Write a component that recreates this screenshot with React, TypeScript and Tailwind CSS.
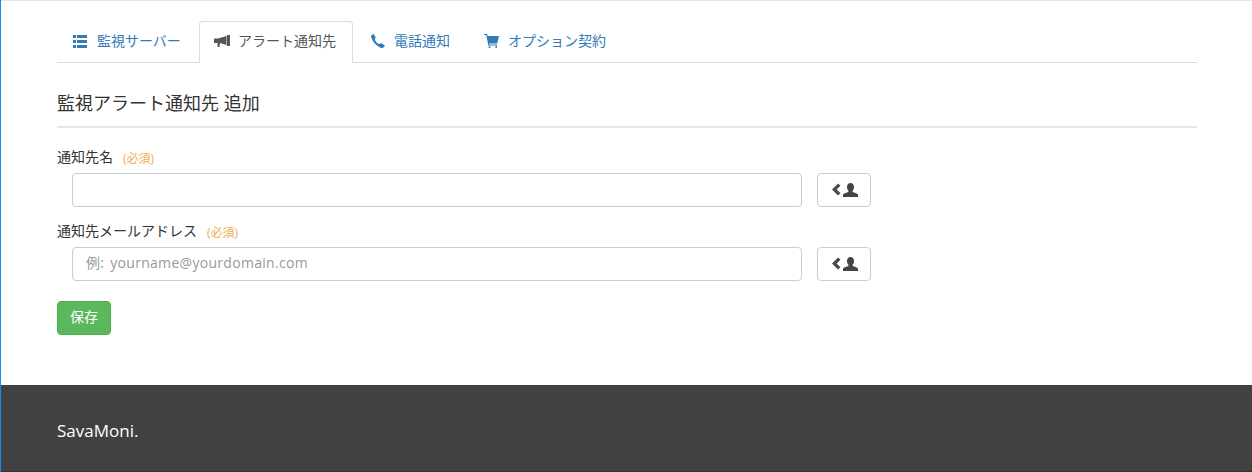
import React from "react";

const font = "font-['Open_Sans','Noto_Sans_CJK_JP',sans-serif]";

function ListIcon() {
  return (
    <svg width="14" height="13" viewBox="0 0 14 13" fill="currentColor">
      <rect x="0" y="0" width="3" height="3" />
      <rect x="4" y="0" width="10" height="3" />
      <rect x="0" y="5" width="3" height="3" />
      <rect x="4" y="5" width="10" height="3" />
      <rect x="0" y="10" width="3" height="3" />
      <rect x="4" y="10" width="10" height="3" />
    </svg>
  );
}

function HornIcon() {
  return (
    <svg width="16" height="12" viewBox="0 0 16 12" fill="currentColor">
      <rect x="13" y="0" width="3" height="11" />
      <path d="M0 3.5 H4 L12.5 1 V10 L6 8 V8 L5.5 12 H3.5 L3.5 8 H0 Z" />
    </svg>
  );
}

function PhoneIcon() {
  return (
    <svg width="14" height="14" viewBox="0 0 14 14" fill="currentColor">
      <path d="M2.6 0 L4.8 3.6 L3.6 5 C4.4 7.4 6 9.2 8.4 10.3 L9.9 9 L14 11.6 L12.4 13.6 C11.6 14.2 10.4 14.1 9 13.4 C4.6 11.4 1.8 8 0.3 3.6 C-0.1 2.2 0.2 1.2 1 0.7 Z" />
    </svg>
  );
}

function CartIcon() {
  return (
    <svg width="15" height="14" viewBox="0 0 15 14" fill="currentColor">
      <path d="M0 0 H3 L3.6 2 H15 L13.2 9.5 H5.2 L5.4 10.6 H13.2 V11.6 H4.4 L2.2 1 H0 Z" />
      <circle cx="5.5" cy="13" r="1" />
      <circle cx="12.2" cy="13" r="1" />
    </svg>
  );
}

function PickIcon() {
  return (
    <svg width="28" height="14" viewBox="0 0 28 14" fill="currentColor">
      <path d="M8 0.5 L2 6.5 L8 12.5 L10.5 10.3 L6.6 6.5 L10.5 2.7 Z" fill="#444b54" />
      <path d="M20.5 0 C22.8 0 24 1.8 24 4 C24 5.8 23.4 7 22.6 7.8 V9 C24.4 9.6 27 10.4 28 11.4 V14 H13 V11.4 C14 10.4 16.6 9.6 18.4 9 V7.8 C17.6 7 17 5.8 17 4 C17 1.8 18.2 0 20.5 0 Z" fill="#444444" />
    </svg>
  );
}

function Tab({ icon, iconBox, label, active, w }: { icon: React.ReactNode; iconBox: string; label: string; active?: boolean; w: string }) {
  return (
    <div
      className={`${w} h-[42px] flex items-center pl-[15px] pb-[3px] text-[14px] leading-5 rounded-t-[4px] border border-b-0 ${
        active ? "border-[#dddddd] bg-white text-[#555555] relative z-10" : "border-transparent text-[#337ab7]"
      }`}
    >
      <span className={`${iconBox} flex items-center shrink-0`}>{icon}</span>
      <span>{label}</span>
    </div>
  );
}

function Field({ label, placeholder, gap }: { label: string; placeholder?: string; gap: string }) {
  return (
    <div className={gap}>
      <div className="h-[20px] mb-[5px] flex items-center text-[14px] text-[#333333]">
        <span className="pb-[4px]">{label}</span>
        <span className="text-[12px] text-[#f0ad4e] ml-[10px] pt-[2px]">(必須)</span>
      </div>
      <div className="flex pl-[15px]">
        <input
          placeholder={placeholder}
          className="w-[730px] h-[34px] px-[13px] pb-[4px] text-[14px] tracking-[0.3px] [word-spacing:2px] border border-[#cccccc] rounded-[4px] bg-white outline-none placeholder:text-[#999999] text-[#555555]"
        />
        <button className="w-[54px] h-[34px] ml-[15px] border border-[#cccccc] rounded-[4px] bg-white flex items-center justify-center pb-[1px]">
          <PickIcon />
        </button>
      </div>
    </div>
  );
}

export default function App() {
  return (
    <div className={`${font} w-[1252px] h-[472px] flex flex-col bg-white border-l border-[#1e88e5] overflow-hidden`}>
      <div className="flex-1 border-t border-[#e5e5e5] pl-[56px] pr-[55px] pt-[20px]">
        <div className="flex border-b border-[#dddddd] h-[42px]">
          <Tab w="w-[142px]" iconBox="w-[24px]" icon={<ListIcon />} label="監視サーバー" />
          <Tab w="w-[154px]" iconBox="w-[24px] -ml-[1px]" active icon={<HornIcon />} label="アラート通知先" />
          <Tab w="w-[114px]" iconBox="w-[25px] pl-[2px]" icon={<PhoneIcon />} label="電話通知" />
          <Tab w="w-[170px]" iconBox="w-[25px] pl-[1px]" icon={<CartIcon />} label="オプション契約" />
        </div>
        <div className="mt-[27px] pb-[10px] border-b-2 border-[#e5e5e5] text-[18px] leading-[26px] text-[#333333]">
          監視アラート通知先 追加
        </div>
        <div className="mt-[20px]">
          <Field label="通知先名" gap="mb-[15px]" />
          <Field label="通知先メールアドレス" placeholder="例: yourname@yourdomain.com" gap="mb-[20px]" />
        </div>
        <button className="w-[54px] h-[34px] rounded-[4px] bg-[#5cb85c] border border-[#4cae4c] text-white text-[14px] pb-[4px]">
          保存
        </button>
      </div>
      <div className="h-[87px] shrink-0 bg-[#414141] pl-[56px] pt-[6px] flex items-center text-white text-[17px] border-b border-[#333333]">
        SavaMoni.
      </div>
    </div>
  );
}
